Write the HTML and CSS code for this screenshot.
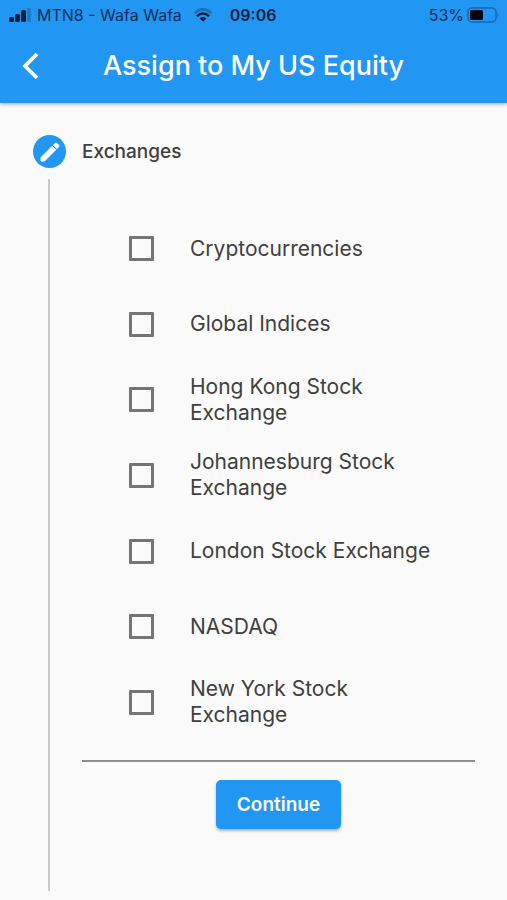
FILE: index.html
```html
<!DOCTYPE html>
<html lang="en">
<head>
<meta charset="utf-8">
<meta name="viewport" content="width=device-width, initial-scale=1">
<title>Assign to My US Equity</title>
<link rel="stylesheet" href="styles.css">
</head>
<body>
<header class="top">
  <div class="status">
    <svg class="signal" width="23" height="14" viewBox="0 0 23 14" aria-hidden="true">
      <rect x="1" y="9" width="5" height="5" rx="1.500"/><rect x="7" y="6" width="5" height="8" rx="1.500"/><rect x="13" y="2" width="5" height="12" rx="1.500"/><rect x="19" y="0" width="4" height="14" rx="1" opacity=".22"/>
    </svg>
    <span class="carrier">MTN8 - Wafa Wafa</span>
    <svg class="wifi" width="20" height="14" viewBox="0 0 20 14" aria-hidden="true">
      <g fill="none" stroke="#0a1f3c" stroke-width="2.600"><path d="M1.500 5.200Q10-2.400 18.500 5.200" opacity=".3"/><path d="M4 8.200Q10 2.800 16 8.200"/></g>
      <path d="M6.600 10.200Q10 7.800 13.400 10.200L10 13.700z" fill="#0a1f3c"/>
    </svg>
    <span class="clock">09:06</span>
    <span class="percent">53%</span>
    <svg class="battery" width="32" height="16" viewBox="0 0 32 16" aria-hidden="true">
      <rect x="1" y="1" width="28" height="14" rx="4" fill="none" stroke="#1766b0" stroke-width="1.500"/>
      <rect x="3" y="3" width="13" height="10" rx="1.500" fill="#020814"/>
      <path d="M30.500 5.500q2 2.500 0 5z" fill="#1766b0"/>
    </svg>
  </div>
  <div class="bar">
    <button class="back" type="button" aria-label="Back">
      <svg width="18" height="28" viewBox="0 0 18 28" aria-hidden="true"><path d="M16 2L4 14L16 26" fill="none" stroke="#fff" stroke-width="3.800"/></svg>
    </button>
    <h1 class="title">Assign to My US Equity</h1>
  </div>
</header>
<main class="stepper">
  <div class="step-head">
    <span class="badge">
      <svg width="26" height="26" viewBox="0 0 26 26" aria-hidden="true"><path fill="#fff" stroke="#fff" stroke-linejoin="round" d="M4 18.500L15.200 7.300L18.700 10.800L7.500 22H4zM16.400 6.100L18.200 4.300Q19 3.600 19.800 4.300L21.700 6.200Q22.400 7 21.700 7.800L19.900 9.600z"/></svg>
    </span>
    <h2 class="step-title">Exchanges</h2>
  </div>
  <form class="step-body">
    <div class="options">
      <label class="option"><input class="check" type="checkbox"><span>Cryptocurrencies</span></label>
      <label class="option"><input class="check" type="checkbox"><span>Global Indices</span></label>
      <label class="option"><input class="check" type="checkbox"><span>Hong Kong Stock Exchange</span></label>
      <label class="option"><input class="check" type="checkbox"><span>Johannesburg Stock Exchange</span></label>
      <label class="option"><input class="check" type="checkbox"><span>London Stock Exchange</span></label>
      <label class="option"><input class="check" type="checkbox"><span>NASDAQ</span></label>
      <label class="option"><input class="check" type="checkbox"><span>New York Stock Exchange</span></label>
    </div>
    <hr class="rule">
    <button class="continue" type="button">Continue</button>
  </form>
</main>
</body>
</html>
```
FILE: styles.css
```css
* { box-sizing: border-box; }
body {
  margin: 0;
  min-height: 100vh;
  display: flex;
  flex-direction: column;
  background: #fafafa;
  color: #404040;
  font-family: Inter, "Liberation Sans", sans-serif;
}
h1, h2 { margin: 0; }
.top {
  background: #2196f3;
  box-shadow: 0 1px 4px rgba(0, 0, 0, .35);
}
.status {
  display: flex;
  align-items: center;
  height: 30px;
  padding: 0 8px;
  color: #0a2f5c;
  font-size: 16px;
}
.signal { fill: #0a1f3c; }
.carrier { margin-left: 6px; }
.wifi { margin-left: 11px; }
.clock { margin-left: 17px; color: #0a1f3c; font-weight: 600; }
.percent { margin-left: auto; }
.battery { margin-left: 3px; }
.bar {
  display: grid;
  grid-template-columns: 60px 1fr 60px;
  align-items: center;
  height: 73px;
  padding-bottom: 1px;
}
.back {
  height: 48px;
  padding: 0;
  border: 0;
  background: none;
}
.back svg { display: block; margin: 0 auto; }
.title {
  color: #fff;
  font-size: 27px;
  font-weight: 500;
  line-height: 32px;
  text-align: center;
  white-space: nowrap;
}
.stepper {
  flex: 1;
  display: flex;
  flex-direction: column;
  padding: 32px 32px 10px 33px;
}
.step-head {
  display: flex;
  align-items: center;
  gap: 16px;
}
.badge {
  display: grid;
  place-items: center;
  width: 33px;
  height: 33px;
  border-radius: 50%;
  background: #2196f3;
}
.step-title {
  font-size: 19px;
  font-weight: 500;
  line-height: 24px;
}
.step-body {
  flex: 1;
  margin: 11px 0 0 15px;
  padding: 32px 0 62px 32px;
  border-left: 2px solid #cacaca;
}
.options {
  display: grid;
  grid-auto-rows: 1fr;
  min-height: 529px;
  padding: 0 24px 0 47px;
}
.option {
  display: flex;
  align-items: center;
  gap: 36px;
  font-size: 21px;
  line-height: 26px;
}
.check {
  appearance: none;
  flex: none;
  width: 25px;
  height: 25px;
  margin: 0;
  border: 3px solid #757575;
  border-radius: 1px;
}
.check:checked { background: #2196f3; border-color: #2196f3; }
.rule {
  height: 2px;
  margin: 20px 0 18px;
  border: 0;
  background: #8e8e8e;
}
.continue {
  display: block;
  height: 49px;
  margin: 0 auto;
  padding: 0 21px;
  border: 0;
  border-radius: 5px;
  background: #2196f3;
  box-shadow: 0 2px 3px rgba(0, 0, 0, .3);
  color: #fff;
  font: 600 19px/24px Inter, "Liberation Sans", sans-serif;
}
```
